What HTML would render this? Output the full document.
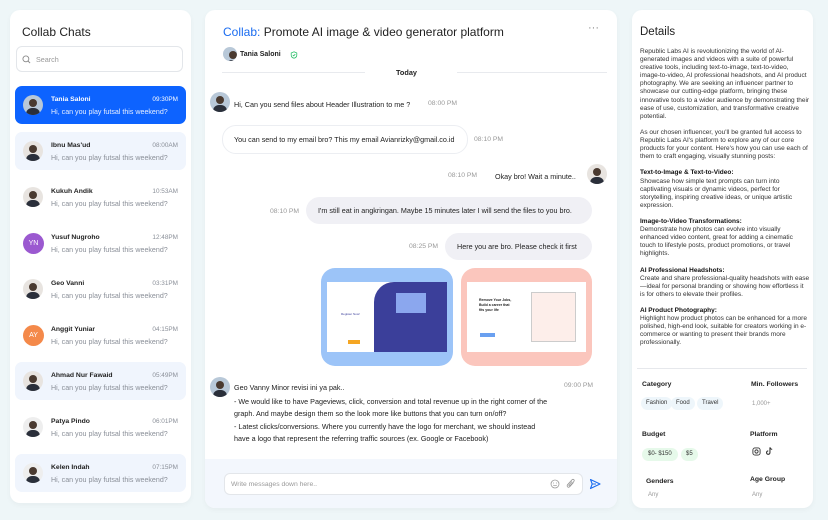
<!DOCTYPE html>
<html><head><style>
*{margin:0;padding:0;box-sizing:border-box}
body{width:828px;height:520px;background:#eef6f8;font-family:"Liberation Sans",sans-serif;position:relative;overflow:hidden;color:#222}
.p{position:absolute;background:#fff;border-radius:10px;box-shadow:0 2px 6px rgba(0,0,0,.04)}
.a{position:absolute;white-space:nowrap}
.av{position:absolute;width:20px;height:20px;border-radius:50%;background:#e8e4e0;overflow:hidden}
.av:after{content:"";position:absolute;left:6px;top:4px;width:8px;height:8px;border-radius:50%;background:#4a3a30}
.av:before{content:"";position:absolute;left:3px;top:13px;width:14px;height:10px;border-radius:6px 6px 0 0;background:#2a2f3a}
.item{position:absolute;left:15px;width:171px;height:38px;border-radius:7px}
.nm{position:absolute;left:36px;top:10px;font-size:6.8px;font-weight:bold;color:#222}
.ms{position:absolute;left:36px;top:22px;font-size:7.1px;color:#8a8f98}
.tm{position:absolute;right:8px;top:10px;font-size:6.4px;color:#8a8f98}
.bub{position:absolute;background:#f0f0f5;border-radius:14px;font-size:7.2px;color:#222;padding:0 12px;line-height:27px;white-space:nowrap}
.t{position:absolute;font-size:6.8px;color:#999;white-space:nowrap}
.det{position:absolute;left:640px;top:48px;width:170px;font-size:6.5px;line-height:8.1px;color:#333}
.det p{margin-bottom:8.1px}
.det b{color:#111}
.lbl{position:absolute;font-size:6.8px;font-weight:bold;color:#222}
.chip{position:absolute;height:13px;border-radius:7px;font-size:6px;line-height:13px;padding:0 5px;color:#333}
</style></head><body>
<!-- left -->
<div class="p" style="left:10px;top:10px;width:181px;height:493px"></div>
<div class="a" style="left:22px;top:25px;font-size:12px;color:#222">Collab Chats</div>
<div class="a" style="left:16px;top:46px;width:167px;height:26px;border:1px solid #e3e6ea;border-radius:6px"></div>
<svg class="a" style="left:22px;top:55px" width="9" height="9" viewBox="0 0 10 10"><circle cx="4.3" cy="4.3" r="3.3" fill="none" stroke="#888" stroke-width="1"/><path d="M6.8 6.8L9 9" stroke="#888" stroke-width="1"/></svg>
<div class="a" style="left:36px;top:55px;font-size:7.2px;color:#999">Search</div>

<div class="item" style="top:86px;background:#0d63ff"><div class="av" style="left:8px;top:9px;background:#b8c8d8"></div><div class="nm" style="color:#fff">Tania Saloni</div><div class="ms" style="color:#e6eeff">Hi, can you play futsal this weekend?</div><div class="tm" style="color:#fff">09:30PM</div></div>
<div class="item" style="top:132px;background:#f0f5fd"><div class="av" style="left:8px;top:9px"></div><div class="nm">Ibnu Mas'ud</div><div class="ms">Hi, can you play futsal this weekend?</div><div class="tm">08:00AM</div></div>
<div class="item" style="top:178px"><div class="av" style="left:8px;top:9px"></div><div class="nm">Kukuh Andik</div><div class="ms">Hi, can you play futsal this weekend?</div><div class="tm">10:53AM</div></div>
<div class="item" style="top:224px"><div style="position:absolute;left:8px;top:9px;width:21px;height:21px;border-radius:50%;background:#9b59d0;color:#fff;font-size:7px;text-align:center;line-height:21px">YN</div><div class="nm">Yusuf Nugroho</div><div class="ms">Hi, can you play futsal this weekend?</div><div class="tm">12:48PM</div></div>
<div class="item" style="top:270px"><div class="av" style="left:8px;top:9px"></div><div class="nm">Geo Vanni</div><div class="ms">Hi, can you play futsal this weekend?</div><div class="tm">03:31PM</div></div>
<div class="item" style="top:316px"><div style="position:absolute;left:8px;top:9px;width:21px;height:21px;border-radius:50%;background:#f4894a;color:#fff;font-size:7px;text-align:center;line-height:21px">AY</div><div class="nm">Anggit Yuniar</div><div class="ms">Hi, can you play futsal this weekend?</div><div class="tm">04:15PM</div></div>
<div class="item" style="top:362px;background:#f0f5fd"><div class="av" style="left:8px;top:9px"></div><div class="nm">Ahmad Nur Fawaid</div><div class="ms">Hi, can you play futsal this weekend?</div><div class="tm">05:49PM</div></div>
<div class="item" style="top:408px"><div class="av" style="left:8px;top:9px;background:#eee"></div><div class="nm">Patya Pindo</div><div class="ms">Hi, can you play futsal this weekend?</div><div class="tm">06:01PM</div></div>
<div class="item" style="top:454px;background:#f0f5fd"><div class="av" style="left:8px;top:9px;background:#eee"></div><div class="nm">Kelen Indah</div><div class="ms">Hi, can you play futsal this weekend?</div><div class="tm">07:15PM</div></div>

<!-- middle -->
<div class="p" style="left:205px;top:10px;width:412px;height:498px;overflow:hidden"><div style="position:absolute;left:0;top:449px;width:412px;height:49px;background:#f3f7fd"></div></div>
<div class="a" style="left:223px;top:25px;font-size:12px;color:#222"><span style="color:#1a6cf0">Collab:</span> Promote AI image &amp; video generator platform</div>
<div class="a" style="left:588px;top:22px;font-size:11px;color:#888">···</div>
<div class="av" style="left:223px;top:47px;width:14px;height:14px;background:#b8c8d8"></div>
<div class="a" style="left:240px;top:51px;font-size:7px;font-weight:bold">Tania Saloni</div>
<svg class="a" style="left:290px;top:51px" width="8" height="8" viewBox="0 0 10 10"><path d="M5 1L8.5 2.5V5C8.5 7 7 8.5 5 9C3 8.5 1.5 7 1.5 5V2.5Z" fill="none" stroke="#2bbf6a" stroke-width="1"/><path d="M3.5 5L4.6 6L6.6 4" fill="none" stroke="#2bbf6a" stroke-width="1"/></svg>
<div class="a" style="left:222px;top:72px;width:143px;height:1px;background:#e8eaee"></div>
<div class="a" style="left:457px;top:72px;width:150px;height:1px;background:#e8eaee"></div>
<div class="a" style="left:396px;top:68px;font-size:7.3px;font-weight:bold">Today</div>

<div class="av" style="left:210px;top:92px;background:#b8c8d8"></div>
<div class="a" style="left:234px;top:100px;font-size:7.2px">Hi, Can you send files about Header Illustration to me ?</div>
<div class="t" style="left:428px;top:100px">08:00 PM</div>
<div class="bub" style="left:222px;top:125px;background:#fff;border:1px solid #eceef2;padding-left:11px">You can send to my email bro? This my email Avianrizky@gmail.co.id</div>
<div class="t" style="left:474px;top:136px">08:10 PM</div>
<div class="t" style="left:448px;top:172px">08:10 PM</div>
<div class="a" style="left:495px;top:172px;font-size:7.2px">Okay bro! Wait a minute..</div>
<div class="av" style="left:587px;top:164px"></div>
<div class="t" style="left:270px;top:208px">08:10 PM</div>
<div class="bub" style="left:306px;top:197px;width:286px">I'm still eat in angkringan. Maybe 15 minutes later I will send the files to you bro.</div>
<div class="t" style="left:409px;top:243px">08:25 PM</div>
<div class="bub" style="left:445px;top:233px;width:147px">Here you are bro. Please check it first</div>

<div class="a" style="left:321px;top:268px;width:132px;height:98px;border-radius:14px;background:#9cc4f8;overflow:hidden">
 <div style="position:absolute;left:6px;top:14px;width:120px;height:70px;background:#fff"></div>
 <div style="position:absolute;left:53px;top:14px;width:73px;height:70px;background:#3b3f9a;border-radius:20px 0 0 0"></div>
 <div style="position:absolute;left:75px;top:25px;width:30px;height:20px;background:#8ba7ee"></div>
 <div style="position:absolute;left:20px;top:44px;font-size:3px;color:#3b3f9a">Register Now!</div>
 <div style="position:absolute;left:27px;top:72px;width:12px;height:4px;background:#f5a623"></div>
</div>
<div class="a" style="left:461px;top:268px;width:131px;height:98px;border-radius:14px;background:#fbc6bd;overflow:hidden">
 <div style="position:absolute;left:6px;top:14px;width:119px;height:70px;background:#fff"></div>
 <div style="position:absolute;left:18px;top:30px;font-size:3.5px;font-weight:bold;line-height:5px;color:#222">Remove Your Jobs,<br>Build a career that<br>fits your life</div>
 <div style="position:absolute;left:19px;top:65px;width:15px;height:4px;background:#6aa0f0"></div>
 <div style="position:absolute;left:70px;top:24px;width:45px;height:50px;border:1px solid #ccc;background:#fdeeea"></div>
</div>

<div class="av" style="left:210px;top:377px;background:#b8c8d8"></div>
<div class="a" style="left:234px;top:383px;font-size:7.2px">Geo Vanny Minor revisi ini ya pak..</div>
<div class="t" style="left:564px;top:382px">09:00 PM</div>
<div class="a" style="left:234px;top:396px;font-size:7.2px;line-height:12.4px;color:#222">- We would like to have Pageviews, click, conversion and total revenue up in the right corner of the<br>graph. And maybe design them so the look more like buttons that you can turn on/off?<br>- Latest clicks/conversions. Where you currently have the logo for merchant, we should instead<br>have a logo that represent the referring traffic sources (ex. Google or Facebook)</div>

<div class="a" style="left:224px;top:473px;width:359px;height:22px;background:#fff;border:1px solid #e3e6ea;border-radius:6px"></div>
<div class="a" style="left:231px;top:481px;font-size:6.8px;color:#999">Write messages down here..</div>
<svg class="a" style="left:550px;top:479px" width="10" height="10" viewBox="0 0 10 10"><circle cx="5" cy="5" r="4" fill="none" stroke="#999" stroke-width=".8"/><circle cx="3.6" cy="4" r=".5" fill="#999"/><circle cx="6.4" cy="4" r=".5" fill="#999"/><path d="M3.2 6Q5 7.6 6.8 6" fill="none" stroke="#999" stroke-width=".7"/></svg>
<svg class="a" style="left:566px;top:478px" width="10" height="11" viewBox="0 0 10 11"><path d="M7.5 4.5L4 8.5Q2.5 10 1.5 8.8Q0.6 7.6 2 6.2L6 1.8Q7 .8 7.9 1.7Q8.7 2.6 7.7 3.6L4 7.6Q3.3 8.2 2.9 7.7Q2.6 7.2 3.2 6.6L6 3.5" fill="none" stroke="#999" stroke-width=".8"/></svg>
<svg class="a" style="left:589px;top:478px" width="12" height="12" viewBox="0 0 12 12"><path d="M1.5 1.5L11 6L1.5 10.5L3.2 6Z M3.2 6H7" fill="none" stroke="#1a6cf0" stroke-width="1.1" stroke-linejoin="round"/></svg>

<!-- right -->
<div class="p" style="left:632px;top:10px;width:181px;height:498px"></div>
<div class="a" style="left:640px;top:26px;font-size:11.5px;color:#222">Details</div>
<div class="det">
<p>Republic Labs AI is revolutionizing the world of AI-generated images and videos with a suite of powerful creative tools, including text-to-image, text-to-video, image-to-video, AI professional headshots, and AI product photography. We are seeking an influencer partner to showcase our cutting-edge platform, bringing these innovative tools to a wider audience by demonstrating their ease of use, customization, and transformative creative potential.</p>
<p>As our chosen influencer, you'll be granted full access to Republic Labs AI's platform to explore any of our core products for your content. Here's how you can use each of them to craft engaging, visually stunning posts:</p>
<p><b>Text-to-Image &amp; Text-to-Video:</b><br>Showcase how simple text prompts can turn into captivating visuals or dynamic videos, perfect for storytelling, inspiring creative ideas, or unique artistic expression.</p>
<p><b>Image-to-Video Transformations:</b><br>Demonstrate how photos can evolve into visually enhanced video content, great for adding a cinematic touch to lifestyle posts, product promotions, or travel highlights.</p>
<p><b>AI Professional Headshots:</b><br>Create and share professional-quality headshots with ease—ideal for personal branding or showing how effortless it is for others to elevate their profiles.</p>
<p><b>AI Product Photography:</b><br>Highlight how product photos can be enhanced for a more polished, high-end look, suitable for creators working in e-commerce or wanting to present their brands more professionally.</p>
</div>
<div class="a" style="left:637px;top:368px;width:170px;height:1px;background:#e6e8ec"></div>
<div class="lbl" style="left:642px;top:381px">Category</div>
<div class="lbl" style="left:751px;top:381px">Min. Followers</div>
<div class="chip" style="left:641px;top:397px;background:#eef6fb">Fashion</div>
<div class="chip" style="left:671px;top:397px;background:#eef6fb">Food</div>
<div class="chip" style="left:697px;top:397px;background:#eef6fb">Travel</div>
<div class="a" style="left:752px;top:401px;font-size:6px;color:#999">1,000+</div>
<div class="lbl" style="left:642px;top:431px">Budget</div>
<div class="lbl" style="left:750px;top:431px">Platform</div>
<div class="chip" style="left:642px;top:448px;background:#e6f9ea;padding:0 6px">$0- $150</div>
<div class="chip" style="left:681px;top:448px;background:#e6f9ea">$5</div>
<svg class="a" style="left:752px;top:447px" width="9" height="9" viewBox="0 0 10 10"><rect x="1" y="1" width="8" height="8" rx="2.3" fill="none" stroke="#333" stroke-width="1"/><circle cx="5" cy="5" r="1.8" fill="none" stroke="#333" stroke-width="1"/></svg>
<svg class="a" style="left:765px;top:446px" width="9" height="10" viewBox="0 0 10 10"><path d="M5.5 1V6.8A1.9 1.9 0 1 1 3.6 4.9M5.5 1Q6 3 8 3.2" fill="none" stroke="#333" stroke-width="1.2"/></svg>
<div class="lbl" style="left:646px;top:478px">Genders</div>
<div class="lbl" style="left:750px;top:476px">Age Group</div>
<div class="a" style="left:648px;top:492px;font-size:6px;color:#999">Any</div>
<div class="a" style="left:752px;top:492px;font-size:6px;color:#999">Any</div>
</body></html>
